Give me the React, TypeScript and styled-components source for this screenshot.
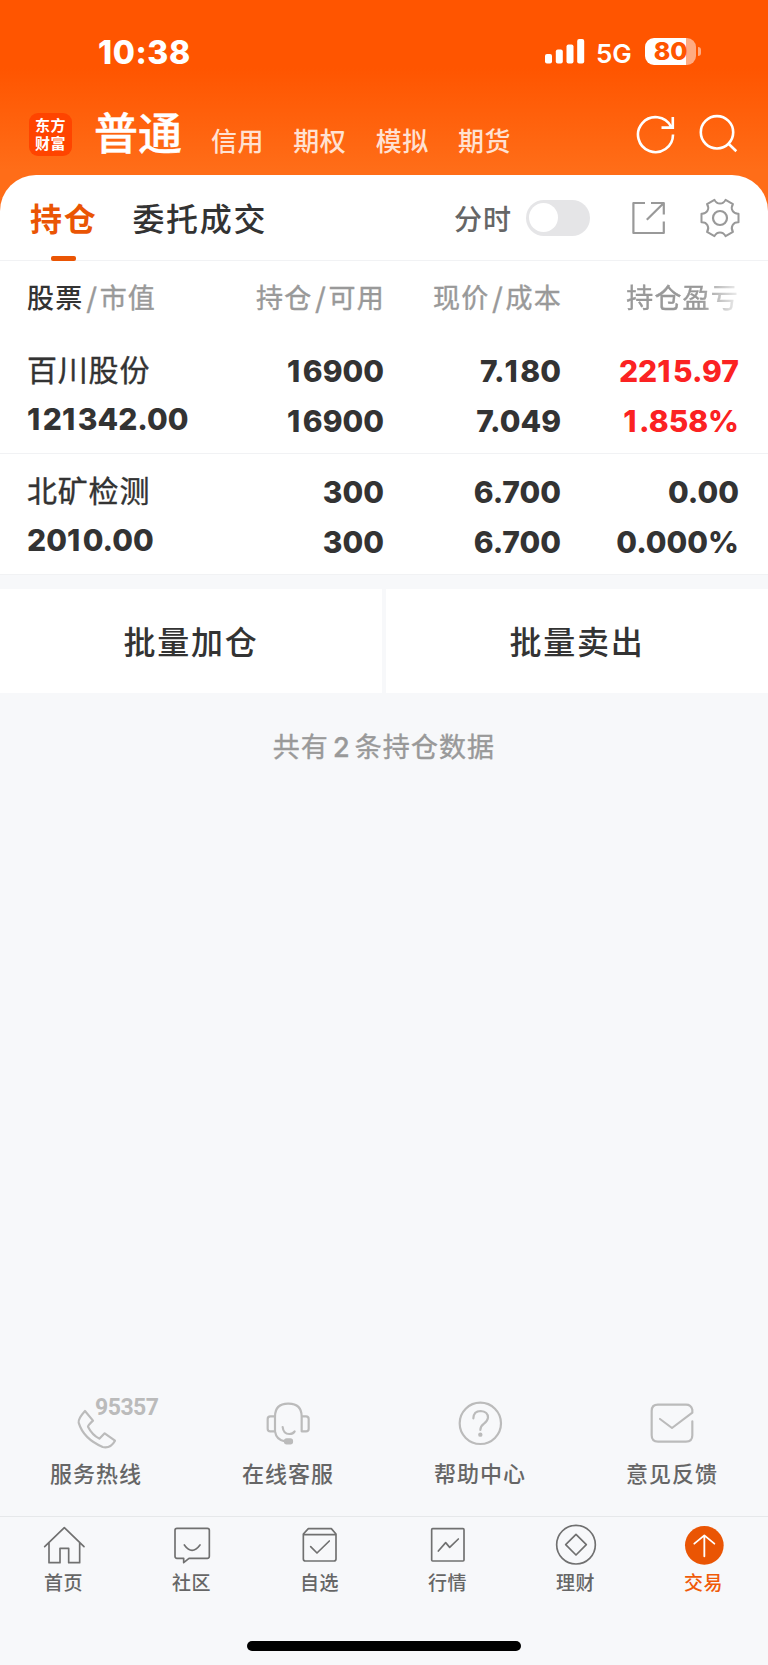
import React from 'react';
import styled, { createGlobalStyle } from 'styled-components';

const cjk = "'Noto Sans CJK SC', sans-serif";
const latin = "Inter, 'Noto Sans CJK SC', sans-serif";
const orange = '#ea5504';
const canvas = '#f7f8fa';

const GlobalStyle = createGlobalStyle`
  * { box-sizing: border-box; }
  body { margin: 0; background: ${canvas}; font-family: ${cjk}; -webkit-font-smoothing: antialiased; }
  svg { display: block; flex: none; }
`;

const Screen = styled.div`
  width: 768px;
  height: 1665px;
  display: flex;
  flex-direction: column;
  overflow: hidden;
  background: linear-gradient(180deg, #ff5500 0, #ff5500 68px, #ff6d18 170px, #ff6d18 220px);
`;

const StatusBar = styled.div`
  height: 100px;
  flex: none;
  display: flex;
  justify-content: space-between;
  padding: 32px 67px 0 98px;
  font-family: ${latin};
  color: #fff;
`;

const Clock = styled.div`
  height: 41px;
  font-size: 32px;
  font-weight: 800;
  letter-spacing: 0.6px;
  line-height: 42px;
`;

const Signals = styled.div`
  display: flex;
  align-items: center;
  height: 39px;
`;

const Network = styled.span`
  flex: none;
  width: 60px;
  padding-left: 11px;
  font-size: 26px;
  font-weight: 600;
  line-height: 43px;
  height: 39px;
`;

const Battery = styled.div`
  width: 51px;
  height: 27px;
  border-radius: 9px;
  background: linear-gradient(90deg, #fff 41px, #ffab82 41px);
  color: #ff5500;
  font-size: 25px;
  font-weight: 800;
  line-height: 27px;
  text-align: center;
  letter-spacing: -0.3px;
`;

const BatteryTip = styled.div`
  width: 3px;
  height: 9px;
  margin-left: 2px;
  border-radius: 0 5px 5px 0;
  background: #ffab82;
`;

const NavBar = styled.div`
  height: 75px;
  flex: none;
  display: flex;
  padding: 13px 30px 0 29px;
  color: #fff;
`;

const Logo = styled.div`
  width: 43px;
  height: 43px;
  padding-top: 3px;
  border-radius: 9px;
  background: #ff4400;
  font-size: 15px;
  font-weight: 700;
  line-height: 18px;
  letter-spacing: 0.5px;
  text-align: center;
`;

const LogoLine = styled.div`
  height: 18px;
`;

const ActiveMode = styled.div`
  width: 88px;
  margin-left: 22px;
  font-size: 44px;
  font-weight: 500;
  line-height: 37px;
  -webkit-text-stroke: 0.4px #fff;
`;

const Modes = styled.div`
  display: flex;
  flex: 1;
  gap: 29.3px;
  margin-left: 29px;
  font-size: 26px;
  letter-spacing: 0.5px;
  line-height: 53px;
  color: #ffe1d2;
  font-weight: 500;
`;

const Card = styled.section`
  flex: none;
  border-radius: 36px 36px 0 0;
  background: #fff;
`;

const Tabs = styled.div`
  display: flex;
  height: 86px;
  border-bottom: 1px solid #f1f2f4;
`;

const Tab = styled.div<{ $active?: boolean }>`
  display: flex;
  flex-direction: column;
  align-items: center;
  justify-content: space-between;
  height: 86px;
  margin-left: ${(p) => (p.$active ? 30 : 35)}px;
  font-size: 32px;
  font-weight: ${(p) => (p.$active ? 700 : 500)};
  letter-spacing: 1.7px;
  line-height: 84px;
  color: ${(p) => (p.$active ? orange : '#333')};
  &::after {
    content: '';
    width: 25px;
    height: 5px;
    flex: none;
    border-radius: 2px;
    margin-top: -4px;
    background: ${(p) => (p.$active ? orange : 'transparent')};
  }
`;

const Tools = styled.div`
  display: flex;
  flex: 1;
  justify-content: flex-end;
  padding: 25px 28px 0 0;
`;

const ToolLabel = styled.span`
  font-size: 28px;
  font-weight: 500;
  letter-spacing: 1px;
  line-height: 37px;
  color: #666;
`;

const Toggle = styled.div`
  width: 64px;
  height: 36px;
  padding: 3px;
  margin: 0 41px 0 14px;
  border-radius: 18px;
  background: #e5e5e7;
  &::before {
    content: '';
    display: block;
    width: 29px;
    height: 29px;
    border-radius: 50%;
    background: #fff;
  }
`;

const Columns = styled.div`
  display: grid;
  grid-template-columns: 200px 157px 177px 178px;
  padding-left: 27px;
`;

const HeadRow = styled(Columns)`
  height: 72px;
  line-height: 71px;
  font-size: 27px;
  letter-spacing: 1.2px;
  color: #999;
  -webkit-text-stroke: 0.4px currentColor;
`;

const HeadCell = styled.div<{ $left?: boolean; $fade?: boolean }>`
  text-align: ${(p) => (p.$left ? 'left' : 'right')};
  margin-right: ${(p) => (p.$fade ? 0 : -1)}px;
  white-space: nowrap;
  ${(p) => p.$fade && 'mask-image: linear-gradient(90deg, #000 0 140px, rgba(0,0,0,.15) 178px);'}
  b {
    font-weight: 500;
    color: #333;
    -webkit-text-stroke: 0;
  }
  i {
    font-style: normal;
    font-weight: 500;
    margin: 0 1.5px 0 3px;
  }
`;

const HoldingRow = styled(Columns)`
  height: 121px;
  border-bottom: 1px solid #f1f2f4;
`;

const Cell = styled.div<{ $left?: boolean; $up?: boolean }>`
  display: flex;
  flex-direction: column;
  align-items: ${(p) => (p.$left ? 'flex-start' : 'flex-end')};
  padding-top: 13px;
  font-family: ${latin};
  font-size: 30px;
  font-weight: 800;
  line-height: 50px;
  color: ${(p) => (p.$up ? '#fb2222' : '#333')};
`;

const One = styled.span`
  letter-spacing: 2.6px;
`;

const StockName = styled.span`
  height: 48px;
  font-family: ${cjk};
  font-size: 30px;
  font-weight: 400;
  letter-spacing: 0.8px;
  line-height: 45px;
  -webkit-text-stroke: 0.4px currentColor;
`;

const BatchBar = styled.div`
  flex: none;
  display: grid;
  grid-template-columns: 382px 1fr;
  gap: 4px;
  height: 118px;
  padding-top: 14px;
  background: ${canvas};
`;

const BatchButton = styled.button`
  border: 0;
  padding: 0 0 2px;
  background: #fff;
  font-family: ${cjk};
  font-size: 32px;
  font-weight: 500;
  letter-spacing: 1.8px;
  color: #333;
`;

const Body = styled.main`
  flex: 1;
  background: ${canvas};
`;

const Summary = styled.p`
  margin: 33px 0 0;
  text-align: center;
  font-size: 27px;
  letter-spacing: 1.1px;
  line-height: 40px;
  color: #999;
  -webkit-text-stroke: 0.4px currentColor;
  span {
    font-family: ${latin};
    font-weight: 500;
    margin: 0 4px 0 4px;
  }
`;

const Services = styled.div`
  flex: none;
  display: grid;
  grid-template-columns: repeat(4, 1fr);
  height: 118px;
  background: ${canvas};
`;

const Service = styled.div`
  position: relative;
  display: flex;
  flex-direction: column;
  align-items: center;
  font-size: 22px;
  font-weight: 500;
  letter-spacing: 1px;
  line-height: 30px;
  color: #666;
  gap: 7px;
`;

const Hotline = styled.span`
  position: absolute;
  left: 95px;
  top: -2px;
  font-family: Roboto, sans-serif;
  font-size: 23px;
  font-weight: 700;
  letter-spacing: -0.5px;
  line-height: 24px;
  color: #bbb;
`;

const TabBar = styled.nav`
  flex: none;
  display: grid;
  grid-template-columns: repeat(6, 1fr);
  height: 149px;
  padding-top: 7px;
  border-top: 1px solid #e6e8ea;
  background: ${canvas};
  position: relative;
`;

const TabItem = styled.div<{ $active?: boolean }>`
  display: flex;
  flex-direction: column;
  align-items: center;
  gap: 2px;
  font-size: 19px;
  font-weight: 500;
  line-height: 28px;
  color: ${(p) => (p.$active ? '#f05a08' : '#666')};
  span {
    letter-spacing: 0.5px;
    margin-right: 1px;
  }
`;

const HomeIndicator = styled.div`
  position: absolute;
  left: 247px;
  bottom: 14px;
  width: 274px;
  height: 10px;
  border-radius: 5px;
  background: #000;
`;

const CogIcon = styled.svg`
  margin: -2px 0 0 33px;
`;

const holdings = [
  { name: '百川股份', value: '121342.00', held: '16900', free: '16900', price: '7.180', cost: '7.049', profit: '2215.97', rate: '1.858%', up: true },
  { name: '北矿检测', value: '2010.00', held: '300', free: '300', price: '6.700', cost: '6.700', profit: '0.00', rate: '0.000%', up: false },
];

// Gives the narrow digit 1 a little more room than the font's own spacing.
function Figure({ children }: { children: string }) {
  return (
    <span>
      {children.split(/(1)/).map((part, i) => (part === '1' ? <One key={i}>1</One> : part))}
    </span>
  );
}

// Six-toothed cog outline centred on (20, 20).
const cogPath = (() => {
  const at = (deg: number, r: number) => {
    const a = (deg * Math.PI) / 180;
    return `${(20 + r * Math.cos(a)).toFixed(2)} ${(20 + r * Math.sin(a)).toFixed(2)}`;
  };
  let d = `M${at(-13, 19)}`;
  for (let k = 0; k < 6; k++) {
    const a = k * 60;
    d += ` L${at(a + 13, 19)} C${at(a + 17, 13.6)} ${at(a + 43, 13.6)} ${at(a + 47, 19)}`;
  }
  return d + 'Z';
})();

const services = [
  {
    label: '服务热线',
    x: 216,
    art: <path d="M255 123L279 152Q264 166 264 170Q276 194 298 206L314 190L345 212Q332 236 308 231Q250 206 236 158Q234 146 255 123Z" />,
  },
  {
    label: '在线客服',
    x: 792,
    art: (
      <>
        <path d="M825 184V140Q825 101 864 101H866Q905 101 905 140V184H918Q926 184 926 176V147Q926 139 918 139H905M825 139H811Q803 139 803 147V176Q803 184 811 184H825Q829 210 855 214" />
        <path d="M848 171Q850 192 868 192Q879 192 884 184" />
        <rect x="855" y="208" width="21" height="12" rx="5" fill="#bbb" />
      </>
    ),
  },
  {
    label: '帮助中心',
    x: 216,
    art: (
      <>
        <circle cx="289" cy="160" r="62" />
        <path d="M268 145Q269 123 290 123Q312 124 312 143Q311 153 300 161Q289 169 289 180" />
        <circle cx="289" cy="194" r="6.5" fill="#bbb" stroke="none" />
      </>
    ),
  },
  {
    label: '意见反馈',
    x: 792,
    art: <path d="M925 154V196Q925 215 906 215H822Q803 215 803 196V123Q803 104 822 104H906Q921 104 925 119V128L864 174L828 147" />,
  },
];

const tabs = [
  { label: '首页', x: 126, art: <path d="M134 530L193 473L252 530M147 518V578H180V535H206V578H239V518" /> },
  {
    label: '社区',
    x: 510,
    art: <path d="M531 475H622Q628 475 628 481V559Q628 565 622 565H567L551 578V565H531Q525 565 525 559V481Q525 475 531 475ZM553 525Q576 557 600 525" />,
  },
  {
    label: '自选',
    x: 894,
    art: <path d="M925 476H994L1008 492V567Q1008 573 1002 573H916Q910 573 910 567V492ZM910 494H1008M932 530L951 549L988 513" />,
  },
  {
    label: '行情',
    x: 126,
    art: (
      <>
        <rect x="143" y="476" width="97" height="97" rx="3" />
        <path d="M163 543L185 518L197 532L223 507" />
      </>
    ),
  },
  {
    label: '理财',
    x: 510,
    art: (
      <>
        <circle cx="576" cy="524" r="58" />
        <path d="M576 493L607 524L576 555L545 524Z" />
      </>
    ),
  },
  {
    label: '交易',
    x: 894,
    active: true,
    art: (
      <>
        <circle cx="961" cy="526" r="58" fill={orange} stroke="none" />
        <path d="M961 559V497M931 521L961 496L991 521" stroke="#fff" strokeWidth="5.5" />
      </>
    ),
  },
];

export default function App() {
  return (
    <Screen>
      <GlobalStyle />
      <StatusBar>
        <Clock>10:38</Clock>
        <Signals>
          <svg width="40" height="25" viewBox="0 0 40 25" fill="#fff">
            <rect x="0" y="15" width="7" height="9.5" rx="2" />
            <rect x="10.8" y="10.5" width="7" height="14" rx="2" />
            <rect x="21.5" y="5.5" width="7" height="19" rx="2" />
            <rect x="32.2" y="0" width="7" height="24.5" rx="2" />
          </svg>
          <Network>5G</Network>
          <Battery>80</Battery>
          <BatteryTip />
        </Signals>
      </StatusBar>
      <NavBar>
        <Logo>
          <LogoLine>东方</LogoLine>
          <LogoLine>财富</LogoLine>
        </Logo>
        <ActiveMode>普通</ActiveMode>
        <Modes>
          <span>信用</span>
          <span>期权</span>
          <span>模拟</span>
          <span>期货</span>
        </Modes>
        <svg width="102" height="44" viewBox="636 113 102 44" fill="none" stroke="#fff" strokeWidth="2.6">
          <path d="M673 134.5A17.5 17.5 0 1 1 671 126.5M672.8 117V127.6H661.5" />
          <circle cx="717" cy="132.3" r="16.2" />
          <path d="M728.3 143.5L736.3 151.3" />
        </svg>
      </NavBar>
      <Card>
        <Tabs>
          <Tab $active>持仓</Tab>
          <Tab>委托成交</Tab>
          <Tools>
            <ToolLabel>分时</ToolLabel>
            <Toggle />
            <svg width="36" height="36" viewBox="631 200 36 36" fill="none" stroke="#999" strokeWidth="2.2" strokeLinejoin="round">
              <path d="M645 203H633.4V233H663.8V221.5M651 203H663.8V214.5M663.5 203.3L646.8 219.7" />
            </svg>
            <CogIcon width="40" height="40" viewBox="0 0 40 40" fill="none" stroke="#999" strokeWidth="2" strokeLinejoin="round">
              <path d={cogPath} />
              <circle cx="20" cy="20" r="7" strokeWidth="2.2" />
            </CogIcon>
          </Tools>
        </Tabs>
        <HeadRow>
          <HeadCell $left>
            <b>股票</b>
            <i>/</i>市值
          </HeadCell>
          <HeadCell>
            持仓<i>/</i>可用
          </HeadCell>
          <HeadCell>
            现价<i>/</i>成本
          </HeadCell>
          <HeadCell $fade>持仓盈亏</HeadCell>
        </HeadRow>
        {holdings.map((h) => (
          <HoldingRow key={h.name}>
            <Cell $left>
              <StockName>{h.name}</StockName>
              <Figure>{h.value}</Figure>
            </Cell>
            <Cell>
              <Figure>{h.held}</Figure>
              <Figure>{h.free}</Figure>
            </Cell>
            <Cell>
              <Figure>{h.price}</Figure>
              <Figure>{h.cost}</Figure>
            </Cell>
            <Cell $up={h.up}>
              <Figure>{h.profit}</Figure>
              <Figure>{h.rate}</Figure>
            </Cell>
          </HoldingRow>
        ))}
      </Card>
      <BatchBar>
        <BatchButton>批量加仓</BatchButton>
        <BatchButton>批量卖出</BatchButton>
      </BatchBar>
      <Body>
        <Summary>
          共有<span>2</span>条持仓数据
        </Summary>
      </Body>
      <Services>
        {services.map((s, i) => (
          <Service key={s.label}>
            <svg width="48" height="52" viewBox={`${s.x} 84 144 156`} fill="none" stroke="#bbb" strokeWidth="6.5" strokeLinecap="round" strokeLinejoin="round">
              {s.art}
            </svg>
            {i === 0 && <Hotline>95357</Hotline>}
            {s.label}
          </Service>
        ))}
      </Services>
      <TabBar>
        {tabs.map((t) => (
          <TabItem key={t.label} $active={t.active}>
            <svg width="44" height="42" viewBox={`${t.x} 462 132 126`} fill="none" stroke="#707070" strokeWidth="5" strokeLinecap="round" strokeLinejoin="round">
              {t.art}
            </svg>
            <span>{t.label}</span>
          </TabItem>
        ))}
        <HomeIndicator />
      </TabBar>
    </Screen>
  );
}
